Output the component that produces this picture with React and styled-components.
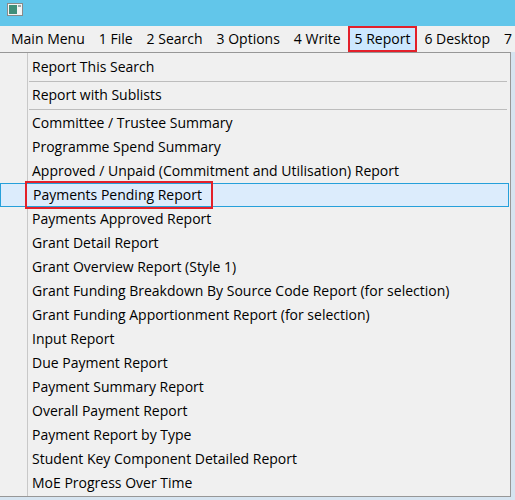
import React from 'react';
import styled, { createGlobalStyle } from 'styled-components';

const Global = createGlobalStyle`
  body { margin: 0; background: #f0f0f0; font-family: 'Open Sans', 'Noto Sans', sans-serif; }
`;

const Window = styled.div`
  width: 515px;
  height: 500px;
  overflow: hidden;
  position: relative;
  background: #d6e4f0;
`;

const TitleBar = styled.div`
  height: 26px;
  background: #62c6ea;
  display: flex;
  align-items: flex-start;
  padding: 3px 0 0 7px;
  box-sizing: border-box;
`;

const MenuBar = styled.div`
  height: 26px;
  background: #f0f0f0;
  display: flex;
  align-items: center;
  padding-left: 4px;
  font-size: 14px;
  color: #000;
  overflow: hidden;
`;

const MenuItem = styled.div`
  padding: 1px 5px 2px;
  white-space: nowrap;
  border: 2px solid ${p => (p.$active ? '#e3202a' : 'transparent')};
  background: ${p => (p.$active ? '#cce8ff' : 'transparent')};
`;

const Dropdown = styled.div`
  position: absolute;
  left: -2px;
  top: 52px;
  width: 513px;
  height: 445px;
  background: #f0f0f0;
  border: 1px solid #979797;
  box-sizing: border-box;
  font-size: 14px;
  padding-top: 2px;
`;

const Gutter = styled.div`
  position: absolute;
  left: 28px;
  top: 0;
  bottom: 0;
  width: 1px;
  background: #c8c8c8;
`;

const Row = styled.div`
  position: relative;
  height: 24px;
  padding-left: 31px;
  margin: 0 1px;
  white-space: nowrap;
  box-sizing: border-box;
  border: 1px solid ${p => (p.$hover ? '#26a0da' : 'transparent')};
  background: ${p => (p.$hover ? '#dcecfc' : 'transparent')};
  line-height: 22px;
`;

const Label = styled.span`
  display: inline-block;
  margin-left: ${p => (p.$boxed ? '-4px' : '0')};
  padding-left: ${p => (p.$boxed ? '5px' : '0')};
  padding-right: ${p => (p.$boxed ? '8px' : '0')};
  outline: ${p => (p.$boxed ? '2px solid #e3202a' : 'none')};
  outline-offset: ${p => (p.$boxed ? '1px' : '0')};
`;

const Separator = styled.div`
  height: 1px;
  background: #bdbdbd;
  margin: 2px 3px 1px 30px;
`;

const menu = ['Main Menu', '1 File', '2 Search', '3 Options', '4 Write', '5 Report', '6 Desktop', '7 Help'];

const items = [
  'Committee / Trustee Summary',
  'Programme Spend Summary',
  'Approved / Unpaid (Commitment and Utilisation) Report',
  'Payments Pending Report',
  'Payments Approved Report',
  'Grant Detail Report',
  'Grant Overview Report (Style 1)',
  'Grant Funding Breakdown By Source Code Report (for selection)',
  'Grant Funding Apportionment Report (for selection)',
  'Input Report',
  'Due Payment Report',
  'Payment Summary Report',
  'Overall Payment Report',
  'Payment Report by Type',
  'Student Key Component Detailed Report',
  'MoE Progress Over Time',
];

const AppIcon = () => (
  <svg width="16" height="13" viewBox="0 0 16 13">
    <rect x="0.5" y="0.5" width="15" height="12" fill="#f4f4f4" stroke="#8a8a8a" />
    <rect x="2" y="2" width="8" height="9" fill="#3f8f7a" />
    <rect x="11" y="2" width="3" height="2" fill="#9aa" />
  </svg>
);

export default function App() {
  return (
    <Window>
      <Global />
      <TitleBar><AppIcon /></TitleBar>
      <MenuBar>
        {menu.map(m => (
          <MenuItem key={m} $active={m === '5 Report'}>{m}</MenuItem>
        ))}
      </MenuBar>
      <Dropdown>
        <Gutter />
        <Row>Report This Search</Row>
        <Separator />
        <Row>Report with Sublists</Row>
        <Separator />
        {items.map(t => (
          <Row key={t} $hover={t === 'Payments Pending Report'}>
            <Label $boxed={t === 'Payments Pending Report'}>{t}</Label>
          </Row>
        ))}
      </Dropdown>
    </Window>
  );
}
